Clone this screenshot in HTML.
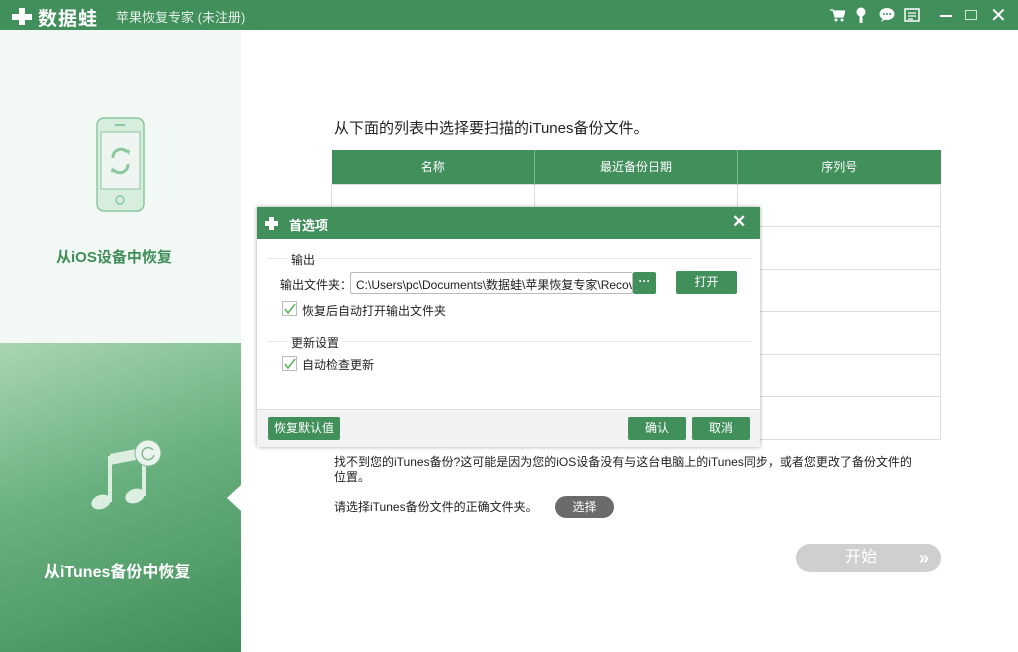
<!DOCTYPE html>
<html><head><meta charset="utf-8"><style>
*{margin:0;padding:0;box-sizing:border-box}
body{width:1018px;height:652px;overflow:hidden;background:#fff;font-family:"Liberation Sans","Noto Sans CJK SC",sans-serif;font-size:12px;color:#222;position:relative}
.abs{position:absolute}
.tb{left:0;top:0;width:1018px;height:30px;background:#418f5b;color:#fff}
.btn{position:absolute;background:#418f5b;color:#fff;text-align:center;border-radius:2px;font-size:12px}
table{border-collapse:collapse}
.ck{position:absolute;width:15px;height:15px;border:1px solid #bbb;background:#fff}
</style></head><body>
<div class="abs tb">
 <svg class="abs" style="left:10px;top:6px" width="26" height="20"><path d="M9 2h6v6h7v6h-7v5H9v-5H2V8h7z" fill="#fff"/></svg>
 <div class="abs" style="left:38px;top:4px;font-size:19px;font-weight:bold;letter-spacing:1px">数据蛙</div>
 <div class="abs" style="left:116px;top:7px;font-size:13px;color:#e4f0e8">苹果恢复专家 (未注册)</div>
 <svg class="abs" style="left:830px;top:9px" width="15" height="13"><path d="M0 1h3l2 7h8l2-6H4" fill="#fff" stroke="#fff" stroke-width="1.2"/><circle cx="6" cy="11" r="1.5" fill="#fff"/><circle cx="12" cy="11" r="1.5" fill="#fff"/></svg>
 <svg class="abs" style="left:856px;top:7px" width="10" height="16"><circle cx="5" cy="5" r="4.5" fill="#fff"/><rect x="3.5" y="8" width="3" height="8" fill="#fff"/></svg>
 <svg class="abs" style="left:879px;top:7px" width="16" height="16"><ellipse cx="8" cy="7" rx="7.5" ry="6" fill="#fff"/><path d="M4 11l-2 4 5-3z" fill="#fff"/><circle cx="5" cy="7" r="1" fill="#418f5b"/><circle cx="8" cy="7" r="1" fill="#418f5b"/><circle cx="11" cy="7" r="1" fill="#418f5b"/></svg>
 <svg class="abs" style="left:904px;top:8px" width="16" height="14"><rect x="1" y="1" width="14" height="12" fill="none" stroke="#fff" stroke-width="1.5"/><path d="M4 5h8M4 8h8M4 11h5" stroke="#fff" stroke-width="1.3"/></svg>
 <div class="abs" style="left:940px;top:15px;width:12px;height:2px;background:#fff"></div>
 <div class="abs" style="left:965px;top:10px;width:12px;height:10px;border:1.5px solid #cfe4d6"></div>
 <div class="abs" style="left:990px;top:3px;font-size:20px">✕</div>
</div>
<div class="abs" style="left:0;top:30px;width:241px;height:313px;background:#f2f9f4"></div>
<svg class="abs" style="left:96px;top:117px" width="50" height="95"><rect x="1" y="1" width="47" height="93" rx="7" fill="#d7eedf" stroke="#8cc79f" stroke-width="1.5"/><rect x="5" y="15" width="39" height="57" fill="#eef5f0" stroke="#8cc79f"/><rect x="19" y="7" width="10" height="2" fill="#8cc79f"/><circle cx="24" cy="83" r="4" fill="none" stroke="#8cc79f" stroke-width="1.5"/><path d="M17 41a8 8 0 0 1 14-6M32 47a8 8 0 0 1-14 6" fill="none" stroke="#8cc79f" stroke-width="3"/><path d="M28 32l6 1-1 5zM21 56l-6-1 1-5z" fill="#8cc79f"/></svg>
<div class="abs" style="left:56px;top:246px;font-size:15px;font-weight:bold;color:#3f8d58">从iOS设备中恢复</div>
<div class="abs" style="left:0;top:343px;width:241px;height:309px;background:linear-gradient(160deg,#a8d5b3,#69b07f 45%,#3f8e59)"></div>
<svg class="abs" style="left:88px;top:438px" width="80" height="75"><path d="M22 16L58 9v11L22 27z" fill="#dbeedf"/><rect x="20" y="18" width="4" height="46" fill="#dbeedf"/><rect x="54" y="12" width="4" height="46" fill="#dbeedf"/><ellipse cx="13" cy="64" rx="10" ry="7" fill="#dbeedf" transform="rotate(-20 13 64)"/><ellipse cx="47" cy="58" rx="10" ry="7" fill="#dbeedf" transform="rotate(-20 47 58)"/><circle cx="60" cy="15" r="13" fill="#eaf4ed" stroke="#7fba92"/><path d="M65 12a6 6 0 1 0 1 5" stroke="#7fba92" stroke-width="1.5" fill="none"/></svg>
<div class="abs" style="left:44px;top:558px;font-size:16px;font-weight:bold;color:#fff">从iTunes备份中恢复</div>
<div class="abs" style="left:227px;top:485px;width:0;height:0;border-top:13px solid transparent;border-bottom:13px solid transparent;border-right:14px solid #fff"></div>
<div class="abs" style="left:334px;top:117px;font-size:15px">从下面的列表中选择要扫描的iTunes备份文件。</div>
<table class="abs" style="left:331px;top:150px;width:610px">
<tr style="background:#418f5b;color:#fff;height:34px"><td style="width:203px;text-align:center;border-right:1px solid #7db58f">名称</td><td style="width:203px;text-align:center;border-right:1px solid #7db58f">最近备份日期</td><td style="text-align:center">序列号</td></tr>
<tr style="height:42.5px"><td style="border:1px solid #ddd"></td><td style="border:1px solid #ddd"></td><td style="border:1px solid #ddd"></td></tr>
<tr style="height:42.5px"><td style="border:1px solid #ddd"></td><td style="border:1px solid #ddd"></td><td style="border:1px solid #ddd"></td></tr>
<tr style="height:42.5px"><td style="border:1px solid #ddd"></td><td style="border:1px solid #ddd"></td><td style="border:1px solid #ddd"></td></tr>
<tr style="height:42.5px"><td style="border:1px solid #ddd"></td><td style="border:1px solid #ddd"></td><td style="border:1px solid #ddd"></td></tr>
<tr style="height:42.5px"><td style="border:1px solid #ddd"></td><td style="border:1px solid #ddd"></td><td style="border:1px solid #ddd"></td></tr>
<tr style="height:42.5px"><td style="border:1px solid #ddd"></td><td style="border:1px solid #ddd"></td><td style="border:1px solid #ddd"></td></tr>
</table>
<div class="abs" style="left:334px;top:455px;width:600px;line-height:15px">找不到您的iTunes备份?这可能是因为您的iOS设备没有与这台电脑上的iTunes同步，或者您更改了备份文件的<br>位置。</div>
<div class="abs" style="left:334px;top:498px">请选择iTunes备份文件的正确文件夹。</div>
<div class="abs" style="left:555px;top:496px;width:59px;height:22px;border-radius:11px;background:#6b6b6b;color:#fff;text-align:center;line-height:22px">选择</div>
<div class="abs" style="left:796px;top:544px;width:145px;height:28px;border-radius:14px;background:#cfcfcf;color:#fff;font-size:16px;line-height:28px"><span style="position:absolute;left:49px">开始</span><span style="position:absolute;right:12px;font-weight:bold;font-size:18px">»</span></div>
<div class="abs" style="left:257px;top:207px;width:503px;height:240px;background:#fff;box-shadow:0 0 4px rgba(0,0,0,.35)">
 <div class="abs" style="left:0;top:0;width:503px;height:32px;background:#418f5b;color:#fff">
  <svg class="abs" style="left:8px;top:10px" width="13" height="13"><path d="M4 0h5v4h4v5H9v4H4V9H0V4h4z" fill="#fff"/></svg>
  <div class="abs" style="left:32px;top:8px;font-size:13px;font-weight:bold">首选项</div>
  <div class="abs" style="left:475px;top:5px;font-size:17px;font-weight:bold">✕</div>
 </div>
 <div class="abs" style="left:10px;top:51px;width:485px;height:1px;background:#e6e6e6"></div>
 <div class="abs" style="left:30px;top:44px;background:#fff;padding:0 4px">输出</div>
 <div class="abs" style="left:23px;top:69px">输出文件夹：</div>
 <div class="abs" style="left:93px;top:65px;width:283px;height:22px;border:1px solid #bbb;border-radius:2px;padding:3px 0 0 5px;overflow:hidden;white-space:nowrap">C:\Users\pc\Documents\数据蛙\苹果恢复专家\Recov</div>
 <div class="btn" style="left:376px;top:65px;width:23px;height:22px;line-height:18px;font-weight:bold">···</div>
 <div class="btn" style="left:419px;top:64px;width:61px;height:23px;line-height:23px">打开</div>
 <div class="ck" style="left:25px;top:94px"><svg width="13" height="13" style="position:absolute;left:0;top:0"><path d="M2 7l3 4 7-9" stroke="#5cb85c" stroke-width="1.6" fill="none"/></svg></div>
 <div class="abs" style="left:45px;top:95px">恢复后自动打开输出文件夹</div>
 <div class="abs" style="left:10px;top:134px;width:485px;height:1px;background:#e6e6e6"></div>
 <div class="abs" style="left:30px;top:127px;background:#fff;padding:0 4px">更新设置</div>
 <div class="ck" style="left:25px;top:149px"><svg width="13" height="13" style="position:absolute;left:0;top:0"><path d="M2 7l3 4 7-9" stroke="#5cb85c" stroke-width="1.6" fill="none"/></svg></div>
 <div class="abs" style="left:45px;top:149px">自动检查更新</div>
 <div class="abs" style="left:0;top:202px;width:503px;height:38px;background:#f2f2f2;border-top:1px solid #ddd"></div>
 <div class="btn" style="left:11px;top:210px;width:72px;height:23px;line-height:23px">恢复默认值</div>
 <div class="btn" style="left:371px;top:210px;width:58px;height:23px;line-height:23px">确认</div>
 <div class="btn" style="left:435px;top:210px;width:58px;height:23px;line-height:23px">取消</div>
</div>
</body></html>
